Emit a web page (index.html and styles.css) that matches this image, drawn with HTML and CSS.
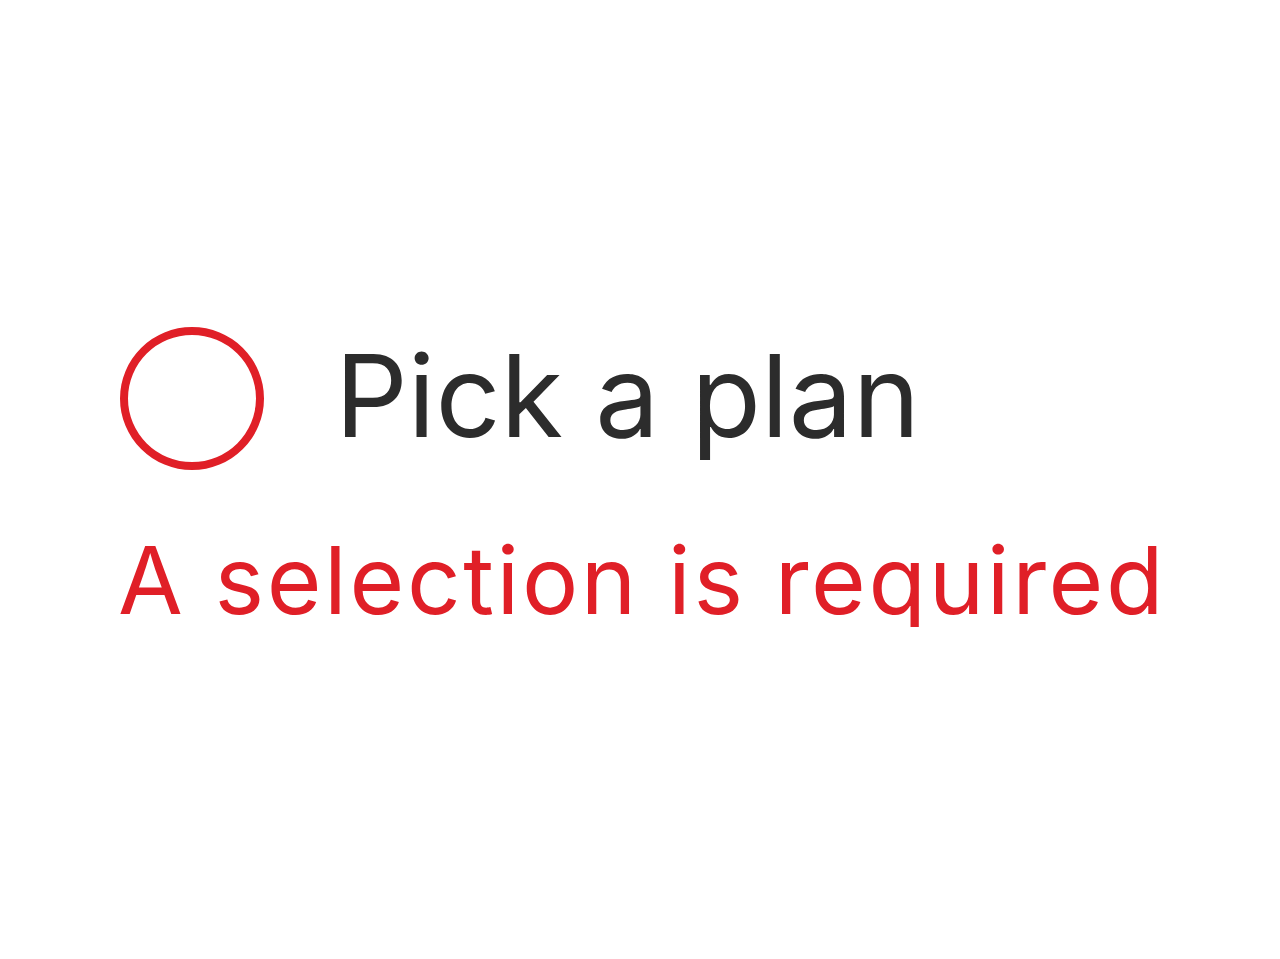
FILE: index.html
```html
<!DOCTYPE html>
<html lang="en">
<head>
  <meta charset="UTF-8">
  <meta name="viewport" content="width=device-width, initial-scale=1.0">
  <title>Pick a plan</title>
  <link rel="stylesheet" href="styles.css">
</head>
<body>
  <div class="field">
    <!-- Radio option -->
    <label class="option">
      <span class="radio"></span>
      <span class="option-label">Pick a plan</span>
    </label>
    <div class="error">A selection is required</div>
  </div>
</body>
</html>
```

FILE: styles.css
```css
* {
  margin: 0;
  padding: 0;
  box-sizing: border-box;
}

body {
  font-family: Inter, 'Noto Sans', sans-serif;
  background: #fff;
}

.field {
  padding: 327px 0 0 120px;
  display: flex;
  flex-direction: column;
  gap: 63px;
}

.option {
  display: flex;
  align-items: center;
  gap: 71px;
}

.radio {
  width: 144px;
  height: 143px;
  border: 8px solid #e01f27;
  border-radius: 50%;
  flex-shrink: 0;
}

.option-label {
  font-size: 114px;
  color: #2c2c2c;
  line-height: 1;
  margin-bottom: 6px;
}

.error {
  font-size: 94px;
  letter-spacing: 2.6px;
  color: #e01f27;
  line-height: 1;
  margin-left: -2px;
}
```
